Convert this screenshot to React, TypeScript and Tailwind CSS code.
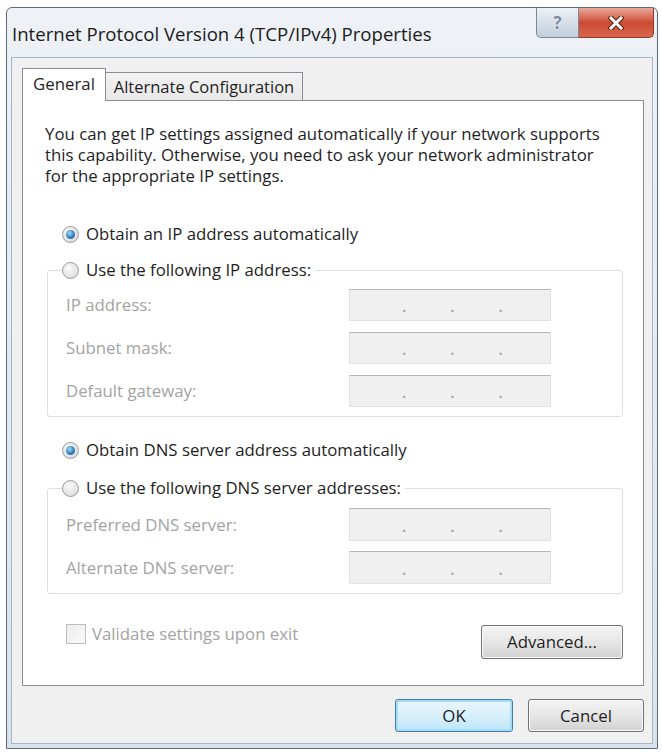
import React from "react";

const font = "font-['Open_Sans',_'Noto_Sans',_sans-serif]";

function Radio({ checked }: { checked: boolean }) {
  return (
    <span className="flex h-[17px] w-[17px] shrink-0 items-center justify-center rounded-full border border-[#9a9a9a] bg-[radial-gradient(circle_at_40%_35%,#fbfbfb,#d4d4d4)]">
      {checked && (
        <span className="h-[9px] w-[9px] rounded-full bg-[radial-gradient(circle_at_40%_35%,#9fdcf8,#2a78b4_60%,#1a4f80)]" />
      )}
    </span>
  );
}

function IpBox({ h }: { h: string }) {
  return (
    <div
      className={`flex w-[202px] items-center border border-[#e2e2e2] border-t-[#b5b8bc] bg-[#f0f0f0] pt-[3px] text-[15px] font-bold leading-none text-[#a8a8a8] ${h}`}
    >
      <span className="ml-[52px]">.</span>
      <span className="ml-[44px]">.</span>
      <span className="ml-[44px]">.</span>
    </div>
  );
}

function Row({ label, h }: { label: string; h: string }) {
  return (
    <div className="flex items-center">
      <span className="w-[283px] text-[#a3a3a3]">{label}</span>
      <IpBox h={h} />
    </div>
  );
}

function Button({
  children,
  className,
  focused,
}: {
  children: React.ReactNode;
  className: string;
  focused?: boolean;
}) {
  return (
    <div
      className={`flex items-center justify-center rounded-[3px] border ${
        focused
          ? "border-[#3c7fb1] bg-gradient-to-b from-[#eaf6fd] via-[#d9f0fc] to-[#bee6fd] shadow-[inset_0_0_0_2px_#a6dcf5]"
          : "border-[#707070] bg-gradient-to-b from-[#f4f4f4] via-[#e6e6e6] to-[#d2d2d2] shadow-[inset_0_0_0_1px_#fbfbfb]"
      } text-[#1e1e1e] ${className}`}
    >
      {children}
    </div>
  );
}

export default function App() {
  return (
    <div className={`h-[754px] w-[662px] bg-white pl-[6px] pt-[7px] ${font} text-[16.8px] text-[#1e1e1e]`}>
      <div className="flex h-[742px] w-[652px] flex-col rounded-t-[6px] border border-[#5d6a7c] bg-gradient-to-b from-[#eef2f7] via-[#e3eaf2] to-[#d9e2ec] px-[4px] pb-[4px]">
        {/* title bar */}
        <div className="flex h-[49px] items-start justify-between">
          <div className="pl-[1px] pt-[13px] text-[18.6px] leading-[26px] text-[#1b1b1b]">
            Internet Protocol Version 4 (TCP/IPv4) Properties
          </div>
          <div className="mr-[-1px] flex">
            <div className="flex h-[30px] w-[43px] items-center justify-center rounded-bl-[5px] border border-t-0 border-[#7c8899] bg-gradient-to-b from-[#eef2f6] via-[#d6dee8] to-[#c3cedb] text-[17px] font-bold text-[#7d8ca3] [text-shadow:0_0_2px_#ffffff]">
              ?
            </div>
            <div className="flex h-[30px] w-[75px] items-center justify-center rounded-br-[5px] border border-l-0 border-t-0 border-[#8a3a2c] bg-gradient-to-b from-[#e9a89a] via-[#cc4a33] to-[#d8674e]">
              <svg width="16" height="14" viewBox="0 0 16 14">
                <path d="M3 2 L13 12 M13 2 L3 12" stroke="#5a1d12" strokeWidth="5" strokeLinecap="square" />
                <path d="M3 2 L13 12 M13 2 L3 12" stroke="#ffffff" strokeWidth="3" strokeLinecap="square" />
              </svg>
            </div>
          </div>
        </div>
        {/* client */}
        <div className="flex flex-1 flex-col border border-[#a7b6c9] bg-[#f0f0f0] pl-[10px] pr-[8px] pt-[10px]">
          {/* tabs */}
          <div className="relative z-10 flex items-end">
            <div className="flex h-[33px] w-[84px] items-center justify-center border border-b-0 border-[#898c95] bg-white pb-[2px]">
              General
            </div>
            <div className="mb-[1px] flex h-[28px] w-[197px] items-center justify-center border border-b-0 border-l-0 border-[#898c95] bg-gradient-to-b from-[#f3f3f3] to-[#e8e8e8] pt-[2px] text-[16.5px]">
              Alternate Configuration
            </div>
          </div>
          {/* panel */}
          <div className="-mt-[1px] flex h-[586px] flex-col border border-[#898c95] bg-white pl-[22px] pr-[20px] pt-[22px]">
            <p className="whitespace-nowrap leading-[21px]">
              You can get IP settings assigned automatically if your network supports
              <br />
              this capability. Otherwise, you need to ask your network administrator
              <br />
              for the appropriate IP settings.
            </p>
            <div className="ml-[17px] mt-[36px] flex h-[24px] items-center gap-[7px]">
              <Radio checked />
              <span>Obtain an IP address automatically</span>
            </div>
            <fieldset className="ml-[2px] mt-[12px] rounded-[3px] border border-[#dce0e4] pb-[9px]">
              <legend className="ml-[14px] flex h-[24px] items-center gap-[7px] bg-white pr-[4px]">
                <Radio checked={false} />
                <span>Use the following IP address:</span>
              </legend>
              <div className="mt-[7px] flex flex-col gap-[11px] pl-[18px]">
                <Row label="IP address:" h="h-[32px]" />
                <Row label="Subnet mask:" h="h-[32px]" />
                <Row label="Default gateway:" h="h-[32px]" />
              </div>
            </fieldset>
            <div className="ml-[17px] mt-[21px] flex h-[24px] items-center gap-[7px]">
              <Radio checked />
              <span>Obtain DNS server address automatically</span>
            </div>
            <fieldset className="ml-[2px] mt-[14px] rounded-[3px] border border-[#dce0e4] pb-[9px]">
              <legend className="ml-[14px] flex h-[24px] items-center gap-[7px] bg-white pr-[4px]">
                <Radio checked={false} />
                <span>Use the following DNS server addresses:</span>
              </legend>
              <div className="mt-[8px] flex flex-col gap-[10px] pl-[18px]">
                <Row label="Preferred DNS server:" h="h-[33px]" />
                <Row label="Alternate DNS server:" h="h-[33px]" />
              </div>
            </fieldset>
            <div className="mt-[30px] flex items-start justify-between">
              <div className="ml-[21px] flex h-[20px] items-center gap-[6px]">
                <span className="h-[20px] w-[20px] border border-[#bcbcbc] bg-gradient-to-br from-[#ececec] to-[#fafafa]" />
                <span className="text-[#a3a3a3]">Validate settings upon exit</span>
              </div>
              <Button className="mt-[1px] h-[34px] w-[142px]">Advanced...</Button>
            </div>
          </div>
          {/* bottom buttons */}
          <div className="mt-[13px] flex justify-end gap-[15px]">
            <Button focused className="h-[33px] w-[118px]">
              OK
            </Button>
            <Button className="h-[33px] w-[116px]">Cancel</Button>
          </div>
        </div>
      </div>
    </div>
  );
}
